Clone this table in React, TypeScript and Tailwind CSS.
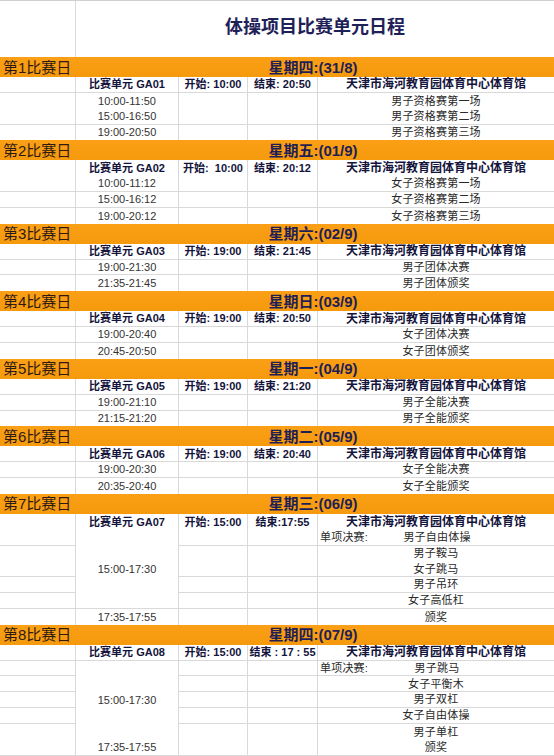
import React from "react";

type Row = {
  time?: string;
  span?: number;
  event: string;
  prefix?: string;
  line?: boolean; // bottom gridline on cols A, C, D, E
  bLine?: boolean; // bottom gridline on col B
};

type Day = {
  label: string;
  week: string;
  unit: string;
  start: string;
  end: string;
  headLine?: boolean;
  rows: Row[];
};

const days: Day[] = [
  {
    label: "第1比赛日",
    week: "星期四:(31/8)",
    unit: "比赛单元 GA01",
    start: "开始: 10:00",
    end: "结束: 20:50",
    headLine: true,
    rows: [
      { time: "10:00-11:50", event: "男子资格赛第一场", line: false, bLine: false },
      { time: "15:00-16:50", event: "男子资格赛第二场", line: true, bLine: true },
      { time: "19:00-20:50", event: "男子资格赛第三场", line: false, bLine: false },
    ],
  },
  {
    label: "第2比赛日",
    week: "星期五:(01/9)",
    unit: "比赛单元 GA02",
    start: "开始:  10:00",
    end: "结束: 20:12",
    headLine: false,
    rows: [
      { time: "10:00-11:12", event: "女子资格赛第一场", line: true, bLine: true },
      { time: "15:00-16:12", event: "女子资格赛第二场", line: true, bLine: true },
      { time: "19:00-20:12", event: "女子资格赛第三场", line: false, bLine: false },
    ],
  },
  {
    label: "第3比赛日",
    week: "星期六:(02/9)",
    unit: "比赛单元 GA03",
    start: "开始: 19:00",
    end: "结束: 21:45",
    headLine: true,
    rows: [
      { time: "19:00-21:30", event: "男子团体决赛", line: true, bLine: true },
      { time: "21:35-21:45", event: "男子团体颁奖", line: false, bLine: false },
    ],
  },
  {
    label: "第4比赛日",
    week: "星期日:(03/9)",
    unit: "比赛单元 GA04",
    start: "开始: 19:00",
    end: "结束: 20:50",
    headLine: true,
    rows: [
      { time: "19:00-20:40", event: "女子团体决赛", line: true, bLine: true },
      { time: "20:45-20:50", event: "女子团体颁奖", line: false, bLine: false },
    ],
  },
  {
    label: "第5比赛日",
    week: "星期一:(04/9)",
    unit: "比赛单元 GA05",
    start: "开始: 19:00",
    end: "结束: 21:20",
    headLine: true,
    rows: [
      { time: "19:00-21:10", event: "男子全能决赛", line: true, bLine: true },
      { time: "21:15-21:20", event: "男子全能颁奖", line: false, bLine: false },
    ],
  },
  {
    label: "第6比赛日",
    week: "星期二:(05/9)",
    unit: "比赛单元 GA06",
    start: "开始: 19:00",
    end: "结束: 20:40",
    headLine: true,
    rows: [
      { time: "19:00-20:30", event: "女子全能决赛", line: true, bLine: true },
      { time: "20:35-20:40", event: "女子全能颁奖", line: false, bLine: false },
    ],
  },
  {
    label: "第7比赛日",
    week: "星期三:(06/9)",
    unit: "比赛单元 GA07",
    start: "开始: 15:00",
    end: "结束:17:55",
    headLine: false,
    rows: [
      { time: "15:00-17:30", span: 5, prefix: "单项决赛:", event: "男子自由体操", line: true, bLine: true },
      { event: "男子鞍马", line: false },
      { event: "女子跳马", line: true },
      { event: "男子吊环", line: true },
      { event: "女子高低杠", line: true },
      { time: "17:35-17:55", event: "颁奖", line: false, bLine: false },
    ],
  },
  {
    label: "第8比赛日",
    week: "星期四:(07/9)",
    unit: "比赛单元 GA08",
    start: "开始: 15:00",
    end: "结束 : 17 : 55",
    headLine: true,
    rows: [
      { time: "15:00-17:30", span: 5, prefix: "单项决赛:", event: "男子跳马", line: true, bLine: false },
      { event: "女子平衡木", line: true },
      { event: "男子双杠", line: true },
      { event: "女子自由体操", line: true },
      { event: "男子单杠", line: false },
      { time: "17:35-17:55", event: "颁奖", line: true, bLine: true },
    ],
  },
];

const font = { fontFamily: '"Liberation Sans", "Noto Sans CJK SC", sans-serif' };

function DayBlock({ day }: { day: Day }) {
  const hb = day.headLine ? "border-b" : "";
  return (
    <div>
      {/* 橙色日期条 */}
      <div className="flex h-[20px] items-center bg-gradient-to-b from-[#fb9f16] to-[#f59a0c]">
        <div className="w-[76px] pl-[3px] text-[15px] leading-none text-[#2e1a12] whitespace-nowrap">
          {day.label}
        </div>
        <div className="flex-1 pr-[4px] text-center text-[15px] font-bold leading-none text-[#1f1f55] whitespace-nowrap">
          {day.week}
        </div>
      </div>

      <div className="grid grid-cols-[76px_103px_69px_70px_1fr] auto-rows-[15.85px]">
        {/* 单元标题行 */}
        <div className={`col-start-1 border-r border-[#d9d9d9] ${hb}`} />
        <div className={`col-start-2 flex items-center justify-center border-r border-[#d9d9d9] text-[11px] font-bold text-[#14143c] whitespace-nowrap ${hb}`}>
          {day.unit}
        </div>
        <div className={`col-start-3 flex items-center justify-center overflow-hidden border-r border-[#d9d9d9] text-[11px] font-bold text-[#14143c] whitespace-pre ${hb}`}>
          {day.start}
        </div>
        <div className={`col-start-4 flex items-center justify-center border-r border-[#d9d9d9] text-[11px] font-bold text-[#14143c] whitespace-pre ${hb}`}>
          {day.end}
        </div>
        <div className={`col-start-5 flex items-center justify-center border-[#d9d9d9] text-[12px] font-bold text-[#14143c] whitespace-nowrap ${hb}`}>
          天津市海河教育园体育中心体育馆
        </div>

        {day.rows.map((r, i) => {
          const lb = r.line ? "border-b" : "";
          const bb = r.bLine ? "border-b" : "";
          return (
            <React.Fragment key={i}>
              <div className={`col-start-1 border-r border-[#d9d9d9] ${lb}`} />
              {r.time !== undefined && (
                <div
                  className={`col-start-2 flex items-center justify-center border-r border-[#d9d9d9] text-[11px] text-[#333] ${bb} ${
                    r.span === 5 ? "row-span-5" : ""
                  }`}
                >
                  {r.time}
                </div>
              )}
              <div className={`col-start-3 border-r border-[#d9d9d9] ${lb}`} />
              <div className={`col-start-4 border-r border-[#d9d9d9] ${lb}`} />
              <div className={`col-start-5 relative flex items-center justify-center border-[#d9d9d9] text-[11px] tracking-[0.2px] text-[#2a2a2a] ${lb}`}>
                {r.prefix && (
                  <span className="absolute left-[2px] top-1/2 -translate-y-1/2">{r.prefix}</span>
                )}
                <span className={r.prefix ? "pl-[2px]" : ""}>{r.event}</span>
              </div>
            </React.Fragment>
          );
        })}
      </div>
    </div>
  );
}

export default function App() {
  return (
    <div className="w-[554px] h-[756px] overflow-hidden bg-white" style={font}>
      {/* 标题行 */}
      <div className="flex h-[57px] border-t border-[#cfcfcf]">
        <div className="w-[76px] border-r border-[#d9d9d9]" />
        <div className="flex flex-1 items-center justify-center pb-[3px] text-[18px] font-bold text-[#1e2158]">
          体操项目比赛单元日程
        </div>
      </div>

      {days.map((d) => (
        <DayBlock key={d.label} day={d} />
      ))}
    </div>
  );
}
